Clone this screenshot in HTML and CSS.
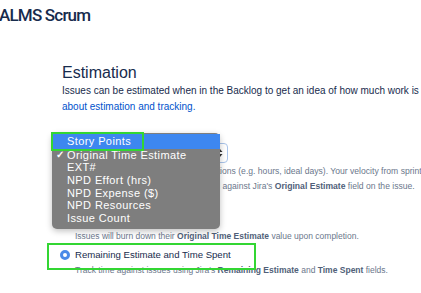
FILE: index.html
```html
<!DOCTYPE html>
<html>
<head>
<meta charset="utf-8">
<link rel="stylesheet" href="styles.css">
</head>
<body>
<header class="top">ALMS Scrum</header>
<main class="content">
  <h2 class="title">Estimation</h2>
  <p class="intro">Issues can be estimated when in the Backlog to get an idea of how much work is being planned for a sprint. Learn more<br><a href="#">about estimation and tracking.</a></p>

  <div class="field">
    <div class="select"><span class="select-value">Original Time Estimate</span><span class="arrows"><svg width="6" height="10" viewBox="0 0 6 10"><path d="M0.5 4L3 1L5.5 4Z M0.5 6L3 9L5.5 6Z" fill="#333"/></svg></span></div>
    <div class="desc first">Estimate issues using time-based estimations (e.g. hours, ideal days). Your velocity from sprints will be measured</div>
    <div class="desc">in days and a burndown will be measured against Jira's <b>Original Estimate</b> field on the issue.</div>
  </div>

  <div class="tracking">
    <div class="label">Time Tracking</div>
    <div class="option"><span class="radio"></span><span>None</span></div>
    <div class="desc sub">Issues will burn down their <b>Original Time Estimate</b> value upon completion.</div>
    <div class="option chosen"><span class="radio on"></span><span>Remaining Estimate and Time Spent</span></div>
    <div class="desc sub">Track time against issues using Jira's <b>Remaining Estimate</b> and <b>Time Spent</b> fields.</div>
  </div>
</main>

<ul class="menu">
  <li class="item active">Story Points</li>
  <li class="item checked">Original Time Estimate</li>
  <li class="item">EXT#</li>
  <li class="item">NPD Effort (hrs)</li>
  <li class="item">NPD Expense ($)</li>
  <li class="item">NPD Resources</li>
  <li class="item">Issue Count</li>
</ul>

<div class="mark mark-top"></div>
<div class="mark mark-bottom"></div>
</body>
</html>
```

FILE: styles.css
```css
html, body {
  margin: 0;
  padding: 0;
  background: #fff;
  width: 421px;
  height: 293px;
  overflow: hidden;
}
body {
  font-family: "Liberation Sans", Arial, sans-serif;
  color: #172b4d;
  position: relative;
}
.top {
  font-family: Roboto, "Liberation Sans", sans-serif;
  font-size: 17px;
  font-weight: 500;
  line-height: 20px;
  padding-top: 5px;
  margin-left: -1px;
  letter-spacing: -0.8px;
  color: #172b4d;
}
.content {
  padding-left: 62px;
  padding-top: 38px;
  white-space: nowrap;
}
.title {
  font-size: 16px;
  font-weight: normal;
  line-height: 20px;
  margin: 0;
  color: #172b4d;
}
.intro {
  font-size: 10px;
  line-height: 15.5px;
  margin: 0;
  color: #172b4d;
}
.intro a {
  color: #0052cc;
  text-decoration: none;
}
.field {
  margin-top: 29px;
}
.select {
  width: 166px;
  height: 20px;
  box-sizing: border-box;
  border: 1px solid #a9c4ea;
  border-radius: 4px;
  background: #fff;
  display: flex;
  align-items: center;
  justify-content: space-between;
  padding: 0 4px 0 6px;
  font-size: 10px;
}
.arrows {
  display: flex;
  align-items: center;
}
.desc {
  font-size: 8.6px;
  line-height: 15px;
  color: #6b778c;
}
.desc.first {
  margin-top: 1px;
}
.desc b {
  color: #505f79;
}
.desc.sub {
  font-size: 8.5px;
  padding-left: 13px;
}
.tracking {
  margin-top: 2px;
}
.label {
  font-size: 10px;
  line-height: 16px;
  color: #6b778c;
}
.option {
  display: flex;
  align-items: center;
  gap: 5px;
  font-size: 9.6px;
  line-height: 17px;
  color: #172b4d;
}
.option.chosen {
  margin-top: 2px;
}
.radio {
  width: 10px;
  height: 10px;
  margin-left: -2px;
  box-sizing: border-box;
  border-radius: 50%;
  border: 1px solid #c1c7d0;
  background: #fafbfc;
}
.radio.on {
  background: #fff;
  border: 3.5px solid #4a8ae8;
}
.menu {
  position: absolute;
  left: 52px;
  top: 133px;
  width: 168px;
  height: 96px;
  margin: 0;
  padding: 1px 0 0 0;
  box-sizing: border-box;
  list-style: none;
  background: #7e7e7e;
  border-radius: 5px;
  box-shadow: 0 2px 6px rgba(0, 0, 0, 0.25);
}
.item {
  font-size: 11px;
  letter-spacing: 0.4px;
  line-height: 12.7px;
  color: #fff;
  padding-left: 15px;
  position: relative;
}
.item.active {
  background: #3d87f0;
  line-height: 14.5px;
}
.item.checked::before {
  content: "\2713";
  position: absolute;
  left: 4px;
  font-size: 10px;
  font-weight: bold;
}
.mark {
  position: absolute;
  border: 2px solid #33d633;
}
.mark-top {
  left: 51px;
  top: 132px;
  width: 89px;
  height: 15px;
}
.mark-bottom {
  left: 47px;
  top: 243px;
  width: 205px;
  height: 23px;
}
```
